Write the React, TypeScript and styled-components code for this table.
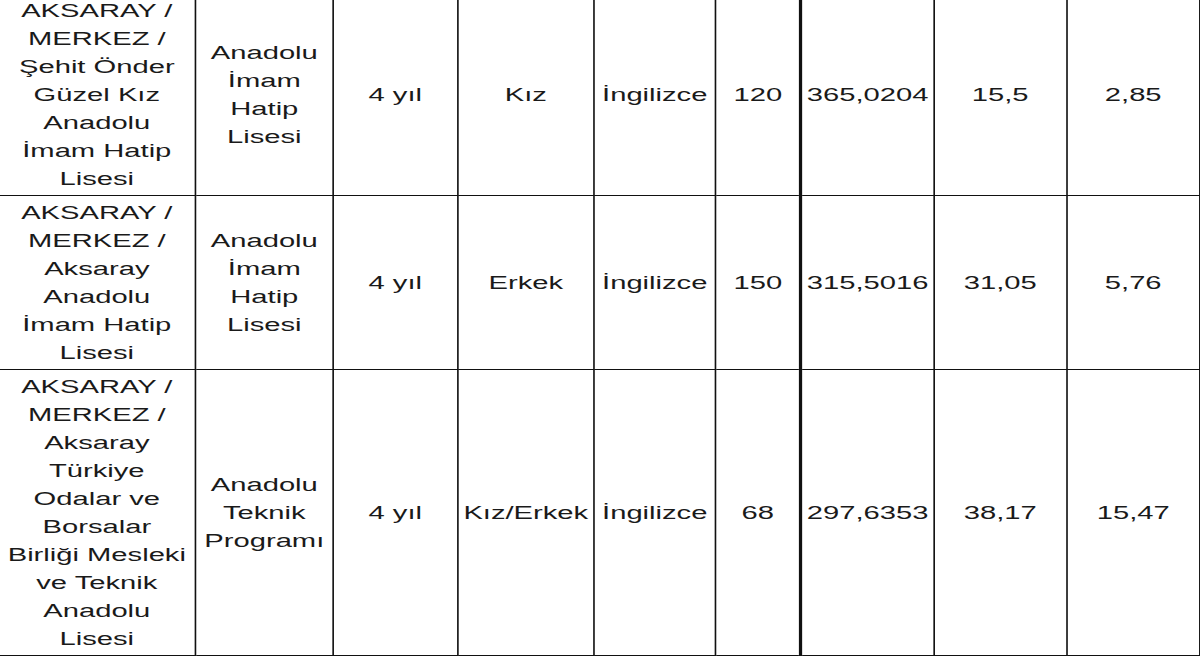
import styled, { createGlobalStyle } from 'styled-components';

const SCALE = 1.62;

// screen widths measured between border centres, divided by the horizontal stretch
const columnWidths = [198, 137, 125, 136, 122, 85, 133, 133, 133].map(w => w / SCALE);

interface Row {
  school: string;
  program: string;
  duration: string;
  gender: string;
  language: string;
  quota: string;
  score: string;
  percentA: string;
  percentB: string;
}

const rows: Row[] = [
  {
    school: 'AKSARAY / MERKEZ / Şehit Önder Güzel Kız Anadolu İmam Hatip Lisesi',
    program: 'Anadolu İmam Hatip Lisesi',
    duration: '4 yıl',
    gender: 'Kız',
    language: 'İngilizce',
    quota: '120',
    score: '365,0204',
    percentA: '15,5',
    percentB: '2,85'
  },
  {
    school: 'AKSARAY / MERKEZ / Aksaray Anadolu İmam Hatip Lisesi',
    program: 'Anadolu İmam Hatip Lisesi',
    duration: '4 yıl',
    gender: 'Erkek',
    language: 'İngilizce',
    quota: '150',
    score: '315,5016',
    percentA: '31,05',
    percentB: '5,76'
  },
  {
    school:
      'AKSARAY / MERKEZ / Aksaray Türkiye Odalar ve Borsalar Birliği Mesleki ve Teknik Anadolu Lisesi',
    program: 'Anadolu Teknik Programı',
    duration: '4 yıl',
    gender: 'Kız/Erkek',
    language: 'İngilizce',
    quota: '68',
    score: '297,6353',
    percentA: '38,17',
    percentB: '15,47'
  }
];

export default function App() {
  return (
    <>
      <GlobalStyle />
      <Page>
        <Table>
          <colgroup>
            {columnWidths.map((w, i) => (
              <col key={i} style={{ width: `${w}px` }} />
            ))}
          </colgroup>
          <tbody>
            {rows.map((row, i) => (
              <tr key={i}>
                <Cell wide>{row.school}</Cell>
                <Cell wide>{row.program}</Cell>
                <Cell>{row.duration}</Cell>
                <Cell>{row.gender}</Cell>
                <Cell>{row.language}</Cell>
                <Cell>{row.quota}</Cell>
                <Cell divider>{row.score}</Cell>
                <Cell>{row.percentA}</Cell>
                <Cell>{row.percentB}</Cell>
              </tr>
            ))}
          </tbody>
        </Table>
      </Page>
    </>
  );
}

const GlobalStyle = createGlobalStyle`
  html, body {
    margin: 0;
    padding: 0;
    background: #ffffff;
    overflow: hidden;
  }
`;

const Page = styled.div`
  width: 1200px;
  height: 657px;
  overflow: hidden;
  background: #ffffff;
`;

const Table = styled.table`
  margin: -7px 0 0 -3px;
  width: ${1202 / SCALE}px;
  table-layout: fixed;
  border-collapse: collapse;
  transform: scaleX(${SCALE});
  transform-origin: 0 0;
  font-family: "Liberation Sans", Arial, Helvetica, sans-serif;
  font-size: 18px;
  line-height: 28px;
  color: #1a1a1a;
`;

const Cell = styled.td<{ divider?: boolean; wide?: boolean }>`
  padding: 3px ${props => (props.wide ? '4px' : '0')} 2px;
  border: 1px solid #111111;
  border-left: ${props => (props.divider ? '2px' : '1px')} solid #111111;
  text-align: center;
  vertical-align: middle;
  white-space: ${props => (props.wide ? 'normal' : 'nowrap')};
`;
